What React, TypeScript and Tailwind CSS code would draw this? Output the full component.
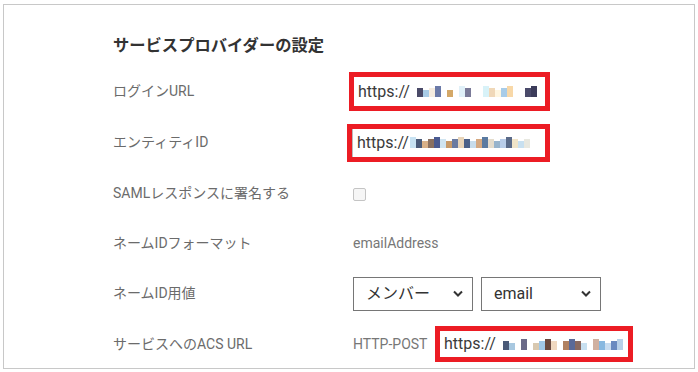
import { ReactNode } from 'react';

const font = { fontFamily: 'Roboto, "Noto Sans CJK JP", sans-serif' };

// pixelated (masked) url tail
function Masked({ cells }: { cells: string[] }) {
  return (
    <span className="ml-[1px] inline-flex h-[11px] items-end">
      {cells.map((c, i) => (
        <span
          key={i}
          className={i % 4 === 0 ? 'h-[11px] w-[6px]' : i % 4 === 2 ? 'h-[7px] w-[6px]' : 'h-[9px] w-[6px]'}
          style={{ backgroundColor: c }}
        />
      ))}
    </span>
  );
}

function RedInput({ cells, border, className }: { cells: string[]; border?: boolean; className: string }) {
  return (
    <div className={`flex items-center border-[5px] border-[#ec1c24] bg-white ${className}`}>
      <div className={`flex h-full w-full items-center pl-[4px] text-[16px] text-[#3a3a3a] ${border ? 'border-l border-[#bbb]' : ''}`}>
        <span>https://</span>
        <Masked cells={cells} />
      </div>
    </div>
  );
}

function Row({ label, children, h = 'h-[51px]' }: { label: string; children?: ReactNode; h?: string }) {
  return (
    <div className={`flex items-center ${h}`}>
      <div className="w-[240px] text-[14px] text-[#6b6b6b]">{label}</div>
      <div className="flex items-center">{children}</div>
    </div>
  );
}

function Select({ value, className }: { value: string; className: string }) {
  return (
    <div className={`flex h-[34px] items-center justify-between border border-[#767676] bg-white pl-[12px] pr-[9px] text-[16px] text-[#333] ${className}`}>
      <span>{value}</span>
      <svg width="10" height="7" viewBox="0 0 10 7">
        <path d="M1 1.5 L5 5.5 L9 1.5" fill="none" stroke="#333" strokeWidth="2" />
      </svg>
    </div>
  );
}

const c1 = ['#fff', '#4a4a68', '#a8cbe6', '#f5ece0', '#6b7aa8', '#fff', '#d4a868', '#fff', '#e0f0f8', '#7a7a98', '#fff', '#fff', '#d8f2f8', '#f0d8b8', '#fff6e0', '#a8cce8', '#f8d8a8', '#fff', '#fff', '#4a4a6a', '#3c3c5a'];
const c2 = ['#c8e2f2', '#4a5a78', '#d8b088', '#8a7060', '#4a5a90', '#d0e4f0', '#c89a68', '#6a7aa0', '#e8d4b8', '#4a6088', '#c8dcea', '#d4a880', '#5a7aa0', '#e4dccc', '#98b4cc', '#b8cce8', '#5a6a88', '#f0e4c8', '#c8e0f0', '#e8e8e0'];
const c3 = ['#fff', '#4a5a78', '#a8c8e0', '#fff', '#6a6a88', '#fff', '#d8c8b0', '#a0c8e8', '#6a4a40', '#f0d8c0', '#fff', '#b08060', '#5a6a98', '#8a6a60', '#c8e0f0', '#fff', '#d0b0a0', '#88b8e0', '#c8dcf0', '#6a8ac0', '#b8d0e8'];

export default function App() {
  return (
    <div className="h-[372px] w-[698px] bg-white px-[3px] pt-[4px]" style={font}>
      <div className="h-[365px] w-[692px] overflow-hidden border border-[#c8c8c8] pl-[109px] pt-[29px]">
        <h2 className="h-[24px] text-[16.3px] font-bold leading-[24px] text-[#333]">サービスプロバイダーの設定</h2>
        <div className="mt-[8px]">
          <Row label="ログインURL">
            <RedInput cells={c1} className="-ml-[4px] h-[39px] w-[201px]" />
          </Row>
          <Row label="エンティティID">
            <RedInput cells={c2} border className="-ml-[6px] h-[38px] w-[203px]" />
          </Row>
          <Row label="SAMLレスポンスに署名する" h="h-[50px]">
            <span className="mt-[3px] block h-[13px] w-[13px] rounded-[2px] border border-[#c4c4c4] bg-[#f6f6f6]" />
          </Row>
          <Row label="ネームIDフォーマット" h="h-[50px]">
            <span className="text-[14px] text-[#777]">emailAddress</span>
          </Row>
          <Row label="ネームID用値">
            <Select value="メンバー" className="w-[120px]" />
            <Select value="email" className="ml-[8px] w-[120px]" />
          </Row>
          <Row label="サービスへのACS URL" h="h-[50px]">
            <span className="w-[82px] text-[14px] text-[#777]">HTTP-POST</span>
            <RedInput cells={c3} className="h-[36px] w-[198px]" />
          </Row>
        </div>
      </div>
    </div>
  );
}
